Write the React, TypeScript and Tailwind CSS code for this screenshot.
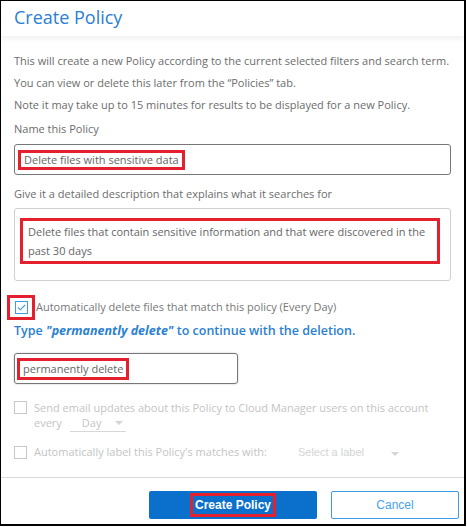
import React from "react"

const font = { fontFamily: "'Open Sans', 'Noto Sans', sans-serif" }
const arial = { fontFamily: "'Liberation Sans', Arial, sans-serif" }

function Box({ checked, disabled }: { checked?: boolean; disabled?: boolean }) {
  return (
    <span
      className={`inline-flex w-[13px] h-[13px] shrink-0 items-center justify-center border ${
        checked ? "border-[#3d9be9]" : disabled ? "border-[#c8c8c8]" : "border-[#999]"
      } bg-white`}
    >
      {checked && (
        <svg width="9" height="7" viewBox="0 0 9 7" fill="none">
          <path d="M1 3.5 L3.4 5.8 L8 1" stroke="#3d9be9" strokeWidth="1.1" />
        </svg>
      )}
    </span>
  )
}

function Caret({ className }: { className: string }) {
  return (
    <svg className={className} width="8" height="4" viewBox="0 0 8 4">
      <path d="M0 0 L8 0 L4 4 Z" fill="#d4d4d4" />
    </svg>
  )
}

export default function App() {
  return (
    <div className="w-[467px] h-[527px] bg-white">
      <div
        className="w-[466px] h-[526px] border-l border-t border-r-2 border-b-2 border-black flex flex-col overflow-hidden"
        style={font}
      >
        {/* Header */}
        <div className="h-[35px] shrink-0 pl-[13px] flex items-center shadow-[0_3px_5px_rgba(0,0,0,0.06)] relative z-10">
          <h1 className="text-[18px] text-[#2a80d2] leading-none -mt-[3px]">Create Policy</h1>
        </div>

        {/* Body */}
        <div className="flex-1 px-[13px] pt-[14px] text-[11px] text-[#6c6c6c]">
          <p className="leading-[22px]">
            This will create a new Policy according to the current selected filters and search term.
            <br />
            You can view or delete this later from the “Policies” tab.
          </p>
          <p className="leading-[22px]">Note it may take up to 15 minutes for results to be displayed for a new Policy.</p>
          <p className="leading-[22px] mt-[2px]">Name this Policy</p>

          <div className="mt-[4px] h-[31px] border border-[#777] rounded-[3px] flex items-center pl-[3px]">
            <span className="border-[3px] border-[#e5202e] px-[3px] leading-[14px] text-[#666]">
              Delete files with sensitive data
            </span>
          </div>

          <p className="leading-[22px] mt-[8px]">Give it a detailed description that explains what it searches for</p>

          <div className="mt-[3px] h-[73px] border border-[#cfcfcf] rounded-[3px] pt-[9px] pl-[5px]">
            <div className="w-[420px] border-[3px] border-[#e5202e] pl-[5px] py-[1px] leading-[19px] text-[#666]">
              Delete files that contain sensitive information and that were discovered in the past 30 days
            </div>
          </div>

          <div className="mt-[14px] flex items-center -ml-[7px]">
            <span className="border-[3px] border-[#e5202e] w-[28px] h-[25px] flex items-center justify-center">
              <Box checked />
            </span>
            <span className="ml-[1px] text-[#777]">Automatically delete files that match this policy (Every Day)</span>
          </div>

          <p className="mt-[1px] text-[12.5px] font-semibold text-[#2a80d2] leading-[20px]">
            Type <i className="font-bold">"permanently delete"</i> to continue with the deletion.
          </p>

          <div className="mt-[12px] w-[224px] h-[31px] border border-[#777] rounded-[3px] flex items-center pl-[2px] shadow-[0_0_2px_rgba(0,0,0,0.25)]">
            <span className="border-[3px] border-[#e5202e] px-[3px] w-[112px] whitespace-nowrap leading-[16px] text-[#666]">
              permanently delete
            </span>
          </div>

          <div className="mt-[16px] flex items-start text-[#c4c4c4]">
            <span className="mt-[1px]"><Box disabled /></span>
            <div className="ml-[7px] leading-[15px]">
              <div>Send email updates about this Policy to Cloud Manager users on this account</div>
              <div className="flex items-start">
                <span>every</span>
                <div className="ml-[8px] w-[56px] h-[17px] border-b border-[#d8d8d8] flex items-start pl-[12px] relative">
                  <span>Day</span>
                  <Caret className="absolute left-[45px] top-[6px]" />
                </div>
              </div>
            </div>
          </div>

          <div className="mt-[12px] flex items-center text-[#c4c4c4]">
            <Box disabled />
            <span className="ml-[7px]">Automatically label this Policy's matches with:</span>
            <span className="ml-[31px] text-[#d4d4d4]" style={arial}>
              Select a label
            </span>
            <Caret className="ml-[27px] mt-[4px]" />
          </div>
        </div>

        {/* Footer */}
        <div className="h-[47px] shrink-0 border-t border-[#d9d9d9] flex items-start justify-end pr-[5px] pt-[13px] gap-[14px]" style={arial}>
          <button className="w-[168px] h-[28px] bg-[#0b70cc] rounded-[2px] flex items-center justify-center">
            <span className="border-[3px] border-[#e5202e] w-[86px] h-[24px] flex items-center justify-center text-white font-bold text-[12px]">
              Create Policy
            </span>
          </button>
          <button className="w-[128px] h-[28px] border border-[#3d9be9] rounded-[2px] text-[#48a2ec] text-[12px]">
            Cancel
          </button>
        </div>
      </div>
    </div>
  )
}
